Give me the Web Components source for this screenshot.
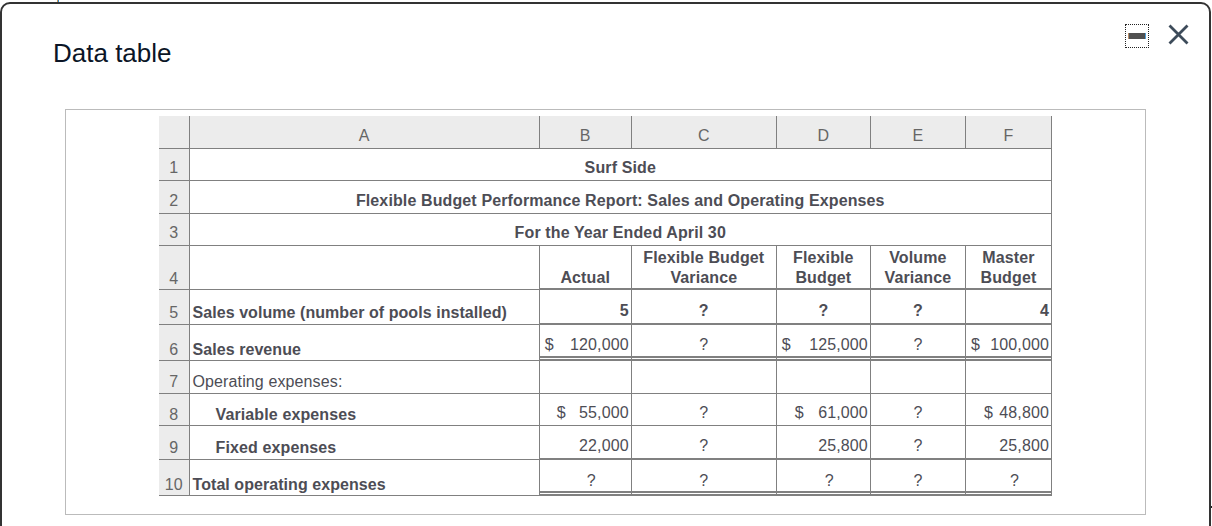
<!DOCTYPE html>
<html>
<head>
<meta charset="utf-8">
<title>Data table</title>
<style>
  html, body { margin: 0; padding: 0; background: #fff; }
  body { font-family: "Liberation Sans", Arial, sans-serif; }
</style>
</head>
<body>
<data-dialog heading="Data table">
  <budget-report></budget-report>
</data-dialog>

<script>
class DataDialog extends HTMLElement {
  constructor() {
    super();
    this.shadowDOM = this.attachShadow({ mode: "open" });
  }
  connectedCallback() {
    this.shadowDOM.innerHTML = `
    <style>
      :host {
        display: block;
        position: relative;
        width: 1212px;
        height: 526px;
        overflow: hidden;
        padding-top: 2px;
        box-sizing: border-box;
      }
      :host::before {
        content: "";
        position: absolute;
        left: 57px;
        top: 0;
        width: 2px;
        height: 2px;
        background: linear-gradient(90deg, #d09a50 50%, #2a86d0 50%);
      }
      :host::after {
        content: "";
        position: absolute;
        right: 0;
        top: 506px;
        width: 1px;
        height: 2px;
        background: #222;
      }
      .box {
        width: 1211px;
        height: 540px;
        box-sizing: border-box;
        border: 2px solid #333;
        border-radius: 10px;
        background: #fff;
        display: flex;
        flex-direction: column;
      }
      header {
        height: 105px;
        flex: none;
        box-sizing: border-box;
        padding: 34px 19px 0 51px;
        display: flex;
        align-items: flex-start;
        justify-content: space-between;
      }
      h1 {
        margin: 0;
        font: 400 26px/30px "Liberation Sans", Arial, sans-serif;
        color: #0b1526;
      }
      .tools {
        display: flex;
        align-items: flex-start;
        gap: 19px;
        margin-top: -14px;
      }
      .min {
        width: 24px;
        height: 24px;
        box-sizing: border-box;
        border: 1px dotted #222;
        display: flex;
        align-items: center;
        justify-content: center;
      }
      .min i {
        display: block;
        width: 18px;
        height: 6px;
        box-sizing: border-box;
        background: #505050;
        border-left: 1px solid #b98f6a;
        border-right: 1px solid #4f9fd8;
      }
      svg { display: block; }
      .panel {
        margin-left: 63px;
        width: 1081px;
        height: 406px;
        box-sizing: border-box;
        border: 1px solid #bbb;
        padding: 6px 0 0 93px;
      }
    </style>
    <div class="box">
      <header>
        <h1>${this.getAttribute("heading")}</h1>
        <div class="tools">
          <div class="min"><i></i></div>
          <svg width="22" height="22" viewBox="0 0 22 22"><path d="M1.5 1.5 L19.5 19.5 M19.5 1.5 L1.5 19.5" stroke="#3d4b5a" stroke-width="2.8" fill="none"/></svg>
        </div>
      </header>
      <div class="panel"><slot></slot></div>
    </div>`;
  }
}

class BudgetReport extends HTMLElement {
  constructor() {
    super();
    this.shadowDOM = this.attachShadow({ mode: "open" });
  }
  connectedCallback() {
    const cols = [30, 350, 92, 145, 94, 95, 86];
    const heads = ["A", "B", "C", "D", "E", "F"];
    const num = (d, v, pad) => `<span class="money" style="padding-left:${pad}px"><span>${d}</span><span>${v}</span></span>`;
    this.shadowDOM.innerHTML = `
    <style>
      :host { display: block; width: 893px; }
      table {
        border-collapse: collapse;
        table-layout: fixed;
        width: 893px;
        font: 16px/20px "Liberation Sans", Arial, sans-serif;
        letter-spacing: 0.12px;
        color: #4d4d55;
      }
      td, th {
        border: 1px solid #808080;
        padding: 0 2px var(--lp, 2px);
        font-weight: 400;
        overflow: hidden;
        white-space: nowrap;
        vertical-align: bottom;
      }
      thead th, td.n { background: #ececec; text-align: center; color: #666; padding-left: 0; padding-right: 0; }
      thead th { vertical-align: middle; padding: 8px 0 0; border-top: 0; }
      td.n { border-left: 0; }
      thead th:first-child { border-left: 0; }
      td.l { padding-left: 3px; }
      td.l.b { letter-spacing: 0.06px; }
      .b { font-weight: 700; }
      .c { text-align: center; }
      .r { text-align: right; }
      .v { padding-bottom: var(--vp, 2px); }
      td.ind { padding-left: 26px; }
      td.off { padding-left: 14px; }
      .thick { border-bottom: 2px solid #808080; }
      .dbl {
        background:
          linear-gradient(#808080, #808080) left 0 bottom 2px / 100% 2px no-repeat,
          linear-gradient(#808080, #808080) left 0 bottom 0 / 100% 1px no-repeat;
      }
      .money { display: flex; justify-content: space-between; box-sizing: border-box; }
    </style>
    <table>
      <colgroup>${cols.map(w => `<col style="width:${w}px">`).join("")}</colgroup>
      <thead>
        <tr style="height:32px"><th></th>${heads.map(h => `<th>${h}</th>`).join("")}</tr>
      </thead>
      <tbody>
        <tr style="height:32px;--lp:2px"><td class="n">1</td><td colspan="6" class="c b">Surf Side</td></tr>
        <tr style="height:33px;--lp:2px"><td class="n">2</td><td colspan="6" class="c b">Flexible Budget Performance Report: Sales and Operating Expenses</td></tr>
        <tr style="height:32px;--lp:2px"><td class="n">3</td><td colspan="6" class="c b">For the Year Ended April 30</td></tr>
        <tr style="height:44px;--lp:0px"><td class="n">4</td><td></td>
          <td class="c b thick">Actual</td>
          <td class="c b thick">Flexible Budget<br>Variance</td>
          <td class="c b thick">Flexible<br>Budget</td>
          <td class="c b thick">Volume<br>Variance</td>
          <td class="c b thick">Master<br>Budget</td></tr>
        <tr style="height:35px;--lp:1px;--vp:2px"><td class="n">5</td><td class="b l">Sales volume (number of pools installed)</td>
          <td class="r b thick v">5</td><td class="c b thick v">?</td><td class="c b thick v">?</td><td class="c b thick v">?</td><td class="r b thick v">4</td></tr>
        <tr style="height:36px;--lp:0px;--vp:5px"><td class="n">6</td><td class="b l">Sales revenue</td>
          <td class="dbl v">${num("$", "120,000", 3)}</td><td class="c dbl v">?</td>
          <td class="dbl v">${num("$", "125,000", 3)}</td><td class="c dbl v">?</td>
          <td class="dbl v">${num("$", "100,000", 3)}</td></tr>
        <tr style="height:33px;--lp:1px"><td class="n">7</td><td class="l">Operating expenses:</td><td></td><td></td><td></td><td></td><td></td></tr>
        <tr style="height:32px;--lp:0px;--vp:2px"><td class="n">8</td><td class="b ind">Variable expenses</td>
          <td class="v">${num("$", "55,000", 15)}</td><td class="c v">?</td>
          <td class="v">${num("$", "61,000", 16)}</td><td class="c v">?</td>
          <td class="v">${num("$", "48,800", 16)}</td></tr>
        <tr style="height:34px;--lp:1px;--vp:2px"><td class="n">9</td><td class="b ind">Fixed expenses</td>
          <td class="r thick v">22,000</td><td class="c thick v">?</td>
          <td class="r thick v">25,800</td><td class="c thick v">?</td>
          <td class="r thick v">25,800</td></tr>
        <tr style="height:36px;--lp:0px;--vp:4px"><td class="n">10</td><td class="b l">Total operating expenses</td>
          <td class="c dbl v off">?</td><td class="c dbl v">?</td><td class="c dbl v off">?</td><td class="c dbl v">?</td><td class="c dbl v off">?</td></tr>
      </tbody>
    </table>`;
  }
}

customElements.define("data-dialog", DataDialog);
customElements.define("budget-report", BudgetReport);
</script>
</body>
</html>
